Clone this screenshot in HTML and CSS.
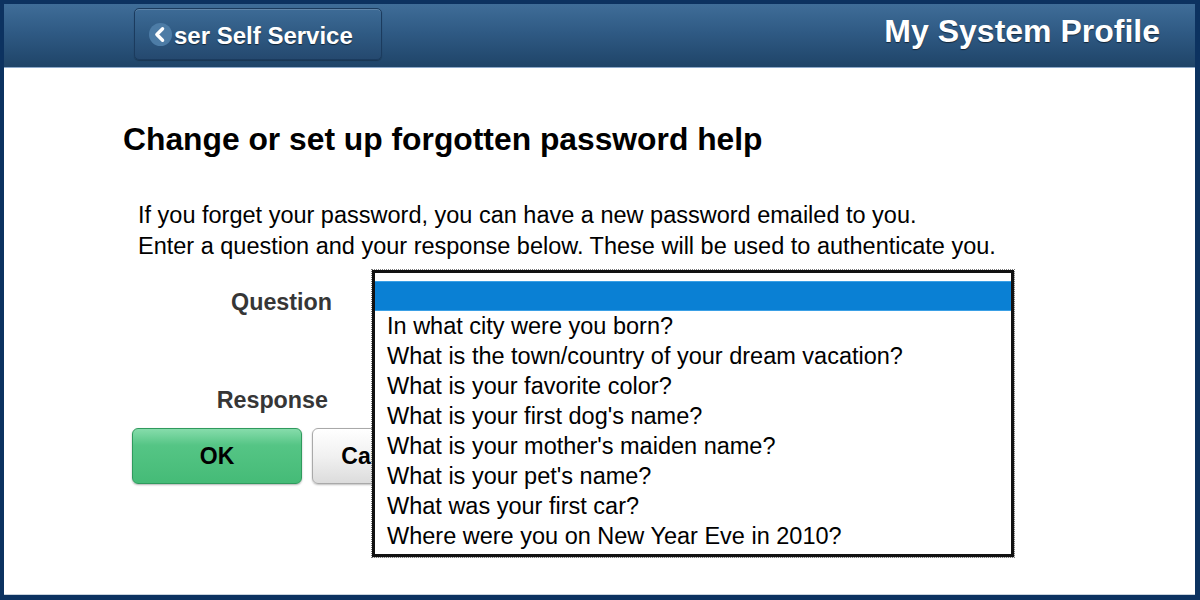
FILE: index.html
```html
<!DOCTYPE html>
<html lang="en">
<head>
<meta charset="utf-8">
<title>My System Profile</title>
<link rel="stylesheet" href="styles.css">
</head>
<body>
<div class="frame">
  <header class="header">
    <button class="back-btn" type="button">
      <svg class="back-icon" width="23" height="23" viewBox="0 0 22 22" aria-hidden="true">
        <circle cx="11" cy="11" r="11" fill="#4d7ca6"/>
        <polyline points="13,5.5 7.5,11 13,16.5" fill="none" stroke="#ffffff" stroke-width="3.2" stroke-linecap="round" stroke-linejoin="round"/>
      </svg>
      <span class="back-label">ser Self Service</span>
    </button>
    <h2 class="page-title">My System Profile</h2>
  </header>
  <main class="main">
    <h1 class="heading">Change or set up forgotten password help</h1>
    <p class="intro">If you forget your password, you can have a new password emailed to you.<br>Enter a question and your response below. These will be used to authenticate you.</p>
    <div class="form">
      <div class="form-row row-question"><span class="label label-question">Question</span></div>
      <div class="form-row row-response"><span class="label">Response</span></div>
      <div class="actions">
        <button class="btn btn-ok" type="button">OK</button>
        <button class="btn btn-cancel" type="button">Cancel</button>
      </div>
    </div>
    <ul class="listbox" role="listbox">
      <li class="option selected" role="option">&nbsp;</li>
      <li class="option" role="option">In what city were you born?</li>
      <li class="option" role="option">What is the town/country of your dream vacation?</li>
      <li class="option" role="option">What is your favorite color?</li>
      <li class="option" role="option">What is your first dog's name?</li>
      <li class="option" role="option">What is your mother's maiden name?</li>
      <li class="option" role="option">What is your pet's name?</li>
      <li class="option" role="option">What was your first car?</li>
      <li class="option" role="option">Where were you on New Year Eve in 2010?</li>
    </ul>
  </main>
</div>
</body>
</html>
```

FILE: styles.css
```css
html, body {
  margin: 0;
  padding: 0;
}

body {
  background: #0c3260;
  font-family: "Liberation Sans", Arial, sans-serif;
}

.frame {
  box-sizing: border-box;
  width: 1200px;
  height: 600px;
  padding: 4px 5px 5px 4px;
  display: flex;
  flex-direction: column;
  background: #0c3260;
}

.header {
  box-sizing: border-box;
  height: 64px;
  flex: none;
  display: flex;
  align-items: flex-start;
  justify-content: space-between;
  padding: 4px 35px 0 130px;
  background: linear-gradient(to bottom, #3f6d98 0%, #2f5a84 45%, #1f4468 100%);
  border-bottom: 1px solid #8eaacb;
}

.back-btn {
  box-sizing: border-box;
  width: 248px;
  height: 52px;
  display: flex;
  align-items: center;
  gap: 2px;
  padding: 0 0 0 14px;
  border: 1px solid #1b3b5e;
  border-radius: 5px;
  background: linear-gradient(to bottom, #3d6b96 0%, #2f5a83 50%, #25496f 100%);
  box-shadow: inset 0 1px 0 rgba(255, 255, 255, 0.18), 0 1px 1px rgba(0, 0, 0, 0.25);
  cursor: pointer;
  font-family: "Liberation Sans", Arial, sans-serif;
}

.back-icon {
  flex: none;
  margin-top: 1px;
}

.back-label {
  color: #ffffff;
  font-size: 24px;
  font-weight: bold;
  text-shadow: 0 1px 1px rgba(0, 0, 0, 0.55);
  padding-top: 4px;
}

.page-title {
  margin: 6px 0 0 0;
  color: #ffffff;
  font-size: 32px;
  line-height: 34px;
  font-weight: bold;
  text-shadow: 0 1px 1px rgba(0, 0, 0, 0.55);
}

.main {
  position: relative;
  flex: 1;
  background: #ffffff;
  border-bottom: 1px solid #c8d2dc;
  padding-top: 55px;
}

.heading {
  margin: 0 0 0 119px;
  font-size: 31.8px;
  line-height: 32px;
  font-weight: bold;
  color: #000000;
}

.intro {
  margin: 45px 0 0 134px;
  font-size: 23.5px;
  line-height: 31px;
  color: #000000;
}

.form {
  margin: 25px 0 0 128px;
}

.form-row {
  display: flex;
  height: 30px;
  align-items: center;
}

.row-response {
  margin-top: 68px;
}

.label {
  display: block;
  width: 196px;
  text-align: right;
  font-size: 23.3px;
  font-weight: bold;
  color: #363636;
}

.label-question {
  width: 200px;
}

.actions {
  display: flex;
  gap: 10px;
  margin-top: 13px;
}

.btn {
  box-sizing: border-box;
  height: 56px;
  border-radius: 6px;
  font-family: "Liberation Sans", Arial, sans-serif;
  font-size: 23px;
  font-weight: bold;
  color: #000000;
  cursor: pointer;
}

.btn-ok {
  width: 170px;
  border: 1px solid #2f9a5d;
  background: linear-gradient(to bottom, #86dcab 0%, #55c585 30%, #45bb77 100%);
  box-shadow: 0 1px 2px rgba(0, 0, 0, 0.3);
}

.btn-cancel {
  width: 134px;
  border: 1px solid #a9a9a9;
  background: linear-gradient(to bottom, #ffffff 0%, #f1f1f1 50%, #dcdcdc 100%);
  box-shadow: 0 1px 2px rgba(0, 0, 0, 0.25);
}

.listbox {
  position: absolute;
  left: 368px;
  top: 202px;
  box-sizing: border-box;
  width: 642px;
  margin: 0;
  padding: 8px 0 3px 0;
  list-style: none;
  background: #ffffff;
  border: 3px solid #111111;
  outline: 1px dotted #7a7a7a;
  outline-offset: 0px;
  box-shadow: 1px 1px 0 rgba(0, 0, 0, 0.15);
}

.option {
  height: 30px;
  line-height: 30px;
  padding-left: 12px;
  font-size: 23.5px;
  color: #000000;
  white-space: nowrap;
}

.option.selected {
  box-sizing: border-box;
  background: #0a80d4;
  border-top: 1px solid #3aa0e6;
  border-bottom: 1px solid #3aa0e6;
}
```
